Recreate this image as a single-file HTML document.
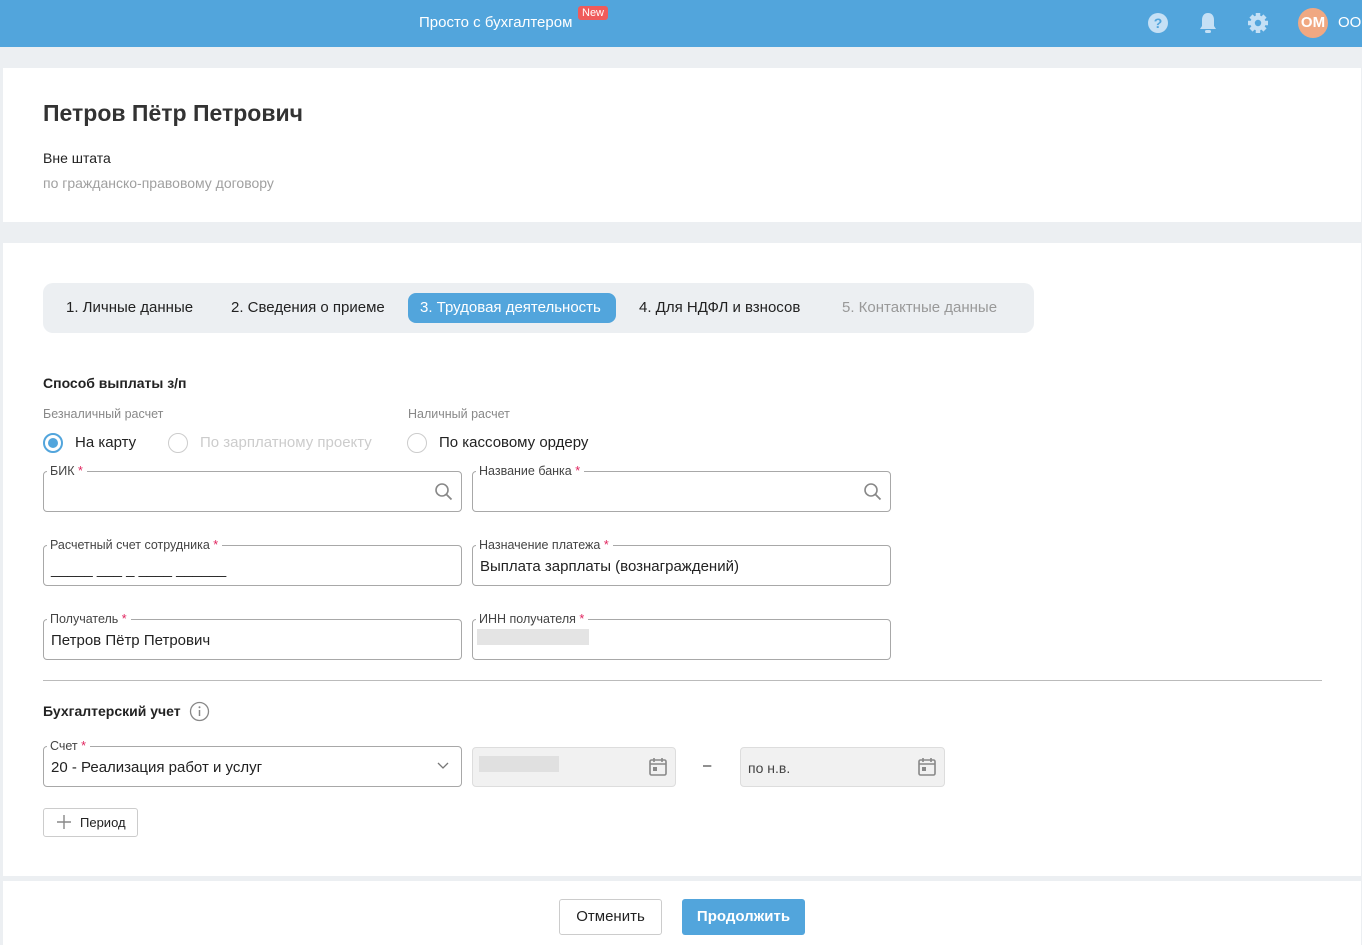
<!DOCTYPE html><html><head><meta charset="utf-8"><style>
*{box-sizing:border-box}body{margin:0;width:1362px;height:945px;overflow:hidden;background:#eceff2;font-family:"Liberation Sans",sans-serif;color:#222;position:relative}
.a{position:absolute}
.hdr{left:0;top:0;width:1362px;height:47px;background:#52a5dc}
.card{background:#fff;left:3px;width:1358px}
fieldset{position:absolute;margin:0;padding:0 7px;border:1px solid #a8a8a8;border-radius:4px;height:41px}
legend{font-size:12.5px;color:#444;padding:0 4px 0 3px;margin-left:-4px;line-height:12px}
legend b{color:#e0245e;font-weight:normal}
.val{position:absolute;left:7px;top:7px;font-size:15px;color:#222}
.tab{position:absolute;top:293px;height:30px;line-height:30px;font-size:15px;padding:0 12px;border-radius:8px}
.rad{position:absolute;width:20px;height:20px;border-radius:50%;border:1px solid #ccc;top:433px}
</style></head><body>
<div class="a hdr"></div>
<div class="a" style="left:419px;top:14px;color:#fff;font-size:15px">Просто с бухгалтером</div>
<div class="a" style="left:578px;top:6px;background:#ef5b5b;color:#fff;font-size:11px;padding:1px 4px;border-radius:3px">New</div>
<svg class="a" style="left:1147px;top:12px" width="22" height="22"><circle cx="11" cy="11" r="10" fill="#c5e0f5"/><text x="11" y="16" text-anchor="middle" font-size="14" font-weight="bold" fill="#52a5dc" font-family="Liberation Sans">?</text></svg>
<svg class="a" style="left:1198px;top:12px" width="20" height="22"><path d="M10 1c-4 0-6 3-6 7v6l-2 3h16l-2-3V8c0-4-2-7-6-7z" fill="#c5e0f5"/><rect x="7" y="18" width="6" height="3" rx="1.5" fill="#c5e0f5"/></svg>
<svg class="a" style="left:1247px;top:12px" width="22" height="22"><g stroke="#c5e0f5" stroke-width="4.5"><path d="M11 1v20M1 11h20M4 4l14 14M18 4L4 18"/></g><circle cx="11" cy="11" r="7.5" fill="#c5e0f5"/><circle cx="11" cy="11" r="3.2" fill="#52a5dc"/></svg>
<div class="a" style="left:1298px;top:8px;width:30px;height:30px;border-radius:50%;background:#f0a882;color:#fff;font-weight:bold;font-size:15px;text-align:center;line-height:30px">OM</div>
<div class="a" style="left:1338px;top:14px;color:#fff;font-size:15px">ООО</div>

<div class="a card" style="top:68px;height:154px"></div>
<div class="a" style="left:43px;top:100px;font-size:23px;font-weight:bold;color:#333">Петров Пётр Петрович</div>
<div class="a" style="left:43px;top:150px;font-size:14px">Вне штата</div>
<div class="a" style="left:43px;top:175px;font-size:14px;color:#a0a0a0">по гражданско-правовому договору</div>

<div class="a card" style="top:243px;height:633px"></div>
<div class="a" style="left:43px;top:283px;width:991px;height:50px;background:#eceff2;border-radius:10px"></div>
<div class="tab" style="left:54px">1. Личные данные</div>
<div class="tab" style="left:219px">2. Сведения о приеме</div>
<div class="tab" style="left:408px;width:208px;background:#52a5dc;color:#fff">3. Трудовая деятельность</div>
<div class="tab" style="left:627px">4. Для НДФЛ и взносов</div>
<div class="tab" style="left:830px;color:#999">5. Контактные данные</div>

<div class="a" style="left:43px;top:375px;font-size:14px;font-weight:bold">Способ выплаты з/п</div>
<div class="a" style="left:43px;top:407px;font-size:12.5px;color:#888">Безналичный расчет</div>
<div class="a" style="left:408px;top:407px;font-size:12.5px;color:#888">Наличный расчет</div>
<div class="rad" style="left:43px;border:2px solid #52a5dc"><div style="margin:3px;width:10px;height:10px;border-radius:50%;background:#52a5dc"></div></div>
<div class="a" style="left:75px;top:434px;font-size:15px">На карту</div>
<div class="rad" style="left:168px"></div>
<div class="a" style="left:200px;top:434px;font-size:15px;color:#ccc">По зарплатному проекту</div>
<div class="rad" style="left:407px"></div>
<div class="a" style="left:439px;top:434px;font-size:15px">По кассовому ордеру</div>

<fieldset style="left:43px;top:465px;width:419px;height:47px"><legend>БИК <b>*</b></legend></fieldset>
<fieldset style="left:472px;top:465px;width:419px;height:47px"><legend>Название банка <b>*</b></legend></fieldset>
<svg class="a" style="left:434px;top:482px" width="20" height="20"><circle cx="8" cy="8" r="6" fill="none" stroke="#888" stroke-width="1.6"/><path d="M12.5 12.5l5 5" stroke="#888" stroke-width="1.8"/></svg>
<svg class="a" style="left:863px;top:482px" width="20" height="20"><circle cx="8" cy="8" r="6" fill="none" stroke="#888" stroke-width="1.6"/><path d="M12.5 12.5l5 5" stroke="#888" stroke-width="1.8"/></svg>
<fieldset style="left:43px;top:539px;width:419px;height:47px"><legend>Расчетный счет сотрудника <b>*</b></legend><span class="val" style="top:10px">_____ ___ _ ____ ______</span></fieldset>
<fieldset style="left:472px;top:539px;width:419px;height:47px"><legend>Назначение платежа <b>*</b></legend><span class="val">Выплата зарплаты (вознаграждений)</span></fieldset>
<fieldset style="left:43px;top:613px;width:419px;height:47px"><legend>Получатель <b>*</b></legend><span class="val">Петров Пётр Петрович</span></fieldset>
<fieldset style="left:472px;top:613px;width:419px;height:47px"><legend>ИНН получателя <b>*</b></legend></fieldset>
<div class="a" style="left:477px;top:629px;width:112px;height:16px;background:#e4e4e4"></div>
<div class="a" style="left:43px;top:680px;width:1279px;height:1px;background:#bbb"></div>
<div class="a" style="left:43px;top:703px;font-size:14px;font-weight:bold">Бухгалтерский учет</div>
<svg class="a" style="left:189px;top:701px" width="21" height="21"><circle cx="10.5" cy="10.5" r="9" fill="none" stroke="#888" stroke-width="1.3"/><path d="M10.5 9v6" stroke="#888" stroke-width="1.5"/><circle cx="10.5" cy="6.3" r="1" fill="#888"/></svg>
<fieldset style="left:43px;top:740px;width:419px;height:47px"><legend>Счет <b>*</b></legend><span class="val">20 - Реализация работ и услуг</span></fieldset>
<svg class="a" style="left:437px;top:762px" width="12" height="8"><path d="M1 1l5 5 5-5" fill="none" stroke="#777" stroke-width="1.3"/></svg>
<div class="a" style="left:472px;top:747px;width:204px;height:40px;background:#f1f1f1;border:1px solid #ddd;border-radius:4px"></div>
<div class="a" style="left:479px;top:756px;width:80px;height:16px;background:#e0e0e0"></div>
<div class="a" style="left:703px;top:757px;font-size:15px">–</div>
<div class="a" style="left:740px;top:747px;width:205px;height:40px;background:#f1f1f1;border:1px solid #ddd;border-radius:4px"></div>
<div class="a" style="left:748px;top:760px;font-size:14px;color:#444">по н.в.</div>
<svg class="a" style="left:648px;top:757px" width="20" height="20"><rect x="2" y="3" width="16" height="15" rx="1.5" fill="none" stroke="#888" stroke-width="1.6"/><path d="M2 7h16M6 1v4M14 1v4" stroke="#888" stroke-width="1.6"/><rect x="5" y="10" width="4" height="4" fill="#888"/></svg>
<svg class="a" style="left:917px;top:757px" width="20" height="20"><rect x="2" y="3" width="16" height="15" rx="1.5" fill="none" stroke="#888" stroke-width="1.6"/><path d="M2 7h16M6 1v4M14 1v4" stroke="#888" stroke-width="1.6"/><rect x="5" y="10" width="4" height="4" fill="#888"/></svg>
<div class="a" style="left:43px;top:808px;width:95px;height:29px;border:1px solid #ccc;border-radius:3px;font-size:13px;line-height:27px;padding-left:36px">Период</div>
<svg class="a" style="left:56px;top:814px" width="16" height="16"><path d="M8 1v14M1 8h14" stroke="#888" stroke-width="1.4"/></svg>

<div class="a card" style="top:881px;height:64px"></div>
<div class="a" style="left:559px;top:899px;width:103px;height:36px;border:1px solid #ccc;border-radius:3px;font-size:15px;text-align:center;line-height:34px">Отменить</div>
<div class="a" style="left:682px;top:899px;width:123px;height:36px;background:#52a5dc;border-radius:3px;font-size:15px;color:#fff;font-weight:bold;text-align:center;line-height:36px">Продолжить</div>
</body></html>
